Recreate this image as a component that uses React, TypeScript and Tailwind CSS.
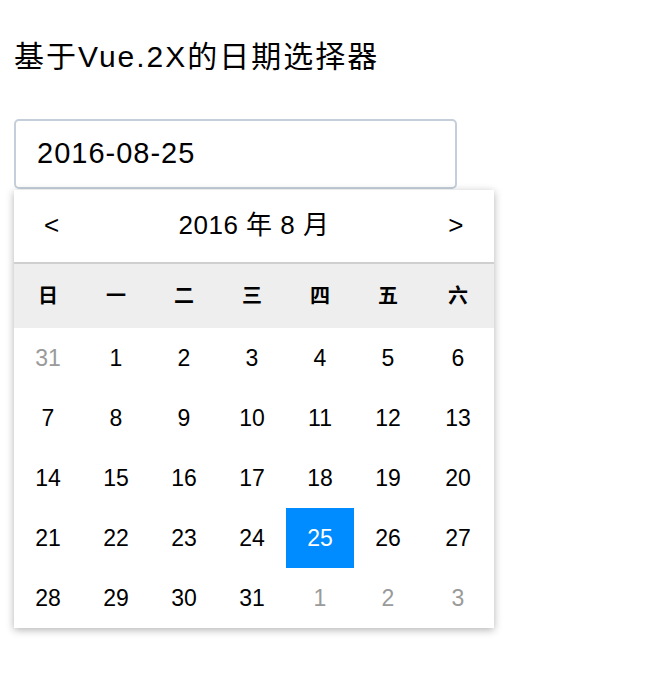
import React from 'react';

const weekdays = ['日', '一', '二', '三', '四', '五', '六'];

interface Day {
  n: number;
  other?: boolean;
}

const buildDays = (): Day[] => {
  const days: Day[] = [{ n: 31, other: true }];
  for (let i = 1; i <= 31; i++) days.push({ n: i });
  for (let i = 1; i <= 3; i++) days.push({ n: i, other: true });
  return days;
};

const font = { fontFamily: '"Liberation Sans", "Noto Sans CJK SC", sans-serif' };

export default function App() {
  const days = buildDays();
  const selected = 25;

  return (
    <div className="min-h-[688px] w-[664px] bg-white px-[14px] text-black" style={font}>
      <h1 className="pt-[37px] text-[30px] font-normal leading-[40px] tracking-[2px]">
        基于Vue.2X的日期选择器
      </h1>

      <div className="mt-[42px] flex h-[70px] w-[443px] items-center rounded-[5px] border-2 border-[#c5cfdb] px-[21px] text-[29px] tracking-[1px]">
        2016-08-25
      </div>

      <div className="mt-px w-[480px] bg-white shadow-[0_2px_8px_rgba(0,0,0,0.3)]">
        <div className="flex h-[74px] items-center justify-between border-b-2 border-[#cfcfcf] pb-[2px] text-[26px] tracking-[0.5px]">
          <span className="w-[76px] pl-[30px]">&lt;</span>
          <span>2016 年 8 月</span>
          <span className="w-[76px] pr-[30px] text-right">&gt;</span>
        </div>

        <div className="grid h-[64px] grid-cols-[68px_68px_68px_68px_68px_68px_1fr] items-center bg-[#eeeeee] text-[20px] font-semibold">
          {weekdays.map((w) => (
            <div key={w} className="text-center">
              {w}
            </div>
          ))}
        </div>

        <div className="grid grid-cols-[68px_68px_68px_68px_68px_68px_1fr] text-[23px]">
          {days.map((d, i) => {
            const active = !d.other && d.n === selected;
            return (
              <div
                key={i}
                className={`flex h-[60px] items-center justify-center ${
                  active ? 'bg-[#008bff] text-white' : d.other ? 'text-[#9a9a9a]' : 'text-black'
                }`}
              >
                {d.n}
              </div>
            );
          })}
        </div>
      </div>
    </div>
  );
}
